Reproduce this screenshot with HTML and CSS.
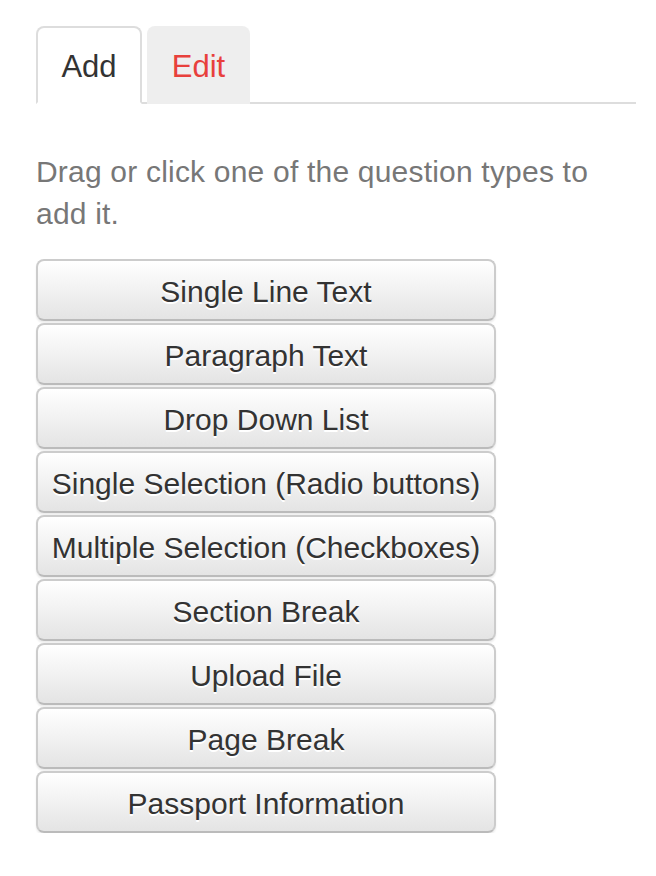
FILE: index.html
```html
<!DOCTYPE html>
<html>
<head>
<meta charset="utf-8">
<link rel="stylesheet" href="styles.css">
</head>
<body>
<div class="panel">
  <ul class="tabs">
    <li class="tab active">Add</li>
    <li class="tab">Edit</li>
  </ul>
  <p class="hint">Drag or click one of the question types to add it.</p>
  <div class="buttons">
    <button class="btn">Single Line Text</button>
    <button class="btn">Paragraph Text</button>
    <button class="btn">Drop Down List</button>
    <button class="btn">Single Selection (Radio buttons)</button>
    <button class="btn">Multiple Selection (Checkboxes)</button>
    <button class="btn">Section Break</button>
    <button class="btn">Upload File</button>
    <button class="btn">Page Break</button>
    <button class="btn">Passport Information</button>
  </div>
</div>
</body>
</html>
```
FILE: styles.css
```css
html, body {
  margin: 0;
  padding: 0;
  background: #fff;
}
body {
  font-family: "Liberation Sans", Arial, sans-serif;
  font-size: 28px;
  color: #333;
}
.panel {
  width: 600px;
  padding: 26px 0 0 36px;
}
.tabs {
  list-style: none;
  margin: 0;
  padding: 0;
  display: flex;
  gap: 5px;
  border-bottom: 2px solid #ddd;
}
.tab {
  height: 78px;
  box-sizing: border-box;
  width: 106px;
  padding: 3px 0 0;
  display: flex;
  align-items: center;
  justify-content: center;
  font-size: 31px;
  border-radius: 8px 8px 0 0;
  background: #eee;
  color: #e8403c;
  margin-bottom: -2px;
  border: 2px solid #eee;
  border-bottom-color: transparent;
}
.tab + .tab {
  width: 103px;
}
.tab.active {
  background: #fff;
  color: #333;
  border-color: #ddd;
  border-bottom-color: #fff;
}
.hint {
  margin: 47px 0 24px;
  width: 580px;
  font-size: 30px;
  letter-spacing: 0.2px;
  color: #777;
  line-height: 42px;
}
.buttons {
  display: flex;
  flex-direction: column;
  gap: 2px;
  width: 460px;
}
.btn {
  height: 62px;
  font-family: inherit;
  font-size: 30px;
  color: #333;
  text-shadow: 0 2px 0 #fff;
  background: linear-gradient(to bottom, #fff 0%, #e4e4e4 100%);
  border: 2px solid #ccc;
  border-bottom-color: #bbb;
  border-radius: 8px;
  box-shadow: inset 0 2px 0 rgba(255,255,255,.15), 0 2px 2px rgba(0,0,0,.075);
  padding: 4px 0 0;
  cursor: pointer;
}
```
